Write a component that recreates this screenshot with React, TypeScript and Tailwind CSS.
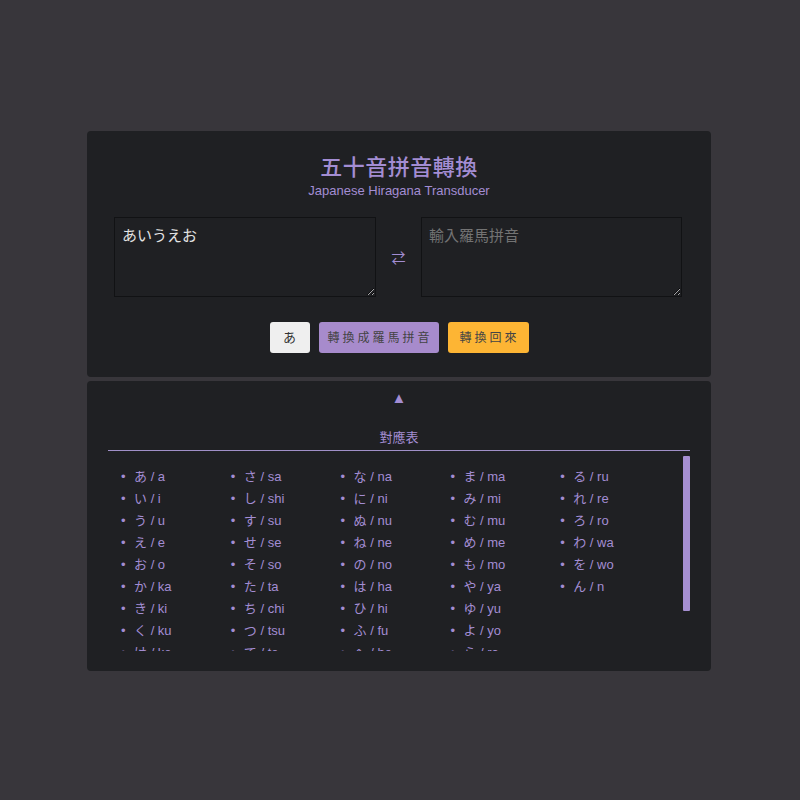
import React, { useState } from 'react'

const kana: [string, string][] = [
  ['あ', 'a'], ['い', 'i'], ['う', 'u'], ['え', 'e'], ['お', 'o'],
  ['か', 'ka'], ['き', 'ki'], ['く', 'ku'], ['け', 'ke'], ['こ', 'ko'],
  ['さ', 'sa'], ['し', 'shi'], ['す', 'su'], ['せ', 'se'], ['そ', 'so'],
  ['た', 'ta'], ['ち', 'chi'], ['つ', 'tsu'], ['て', 'te'], ['と', 'to'],
  ['な', 'na'], ['に', 'ni'], ['ぬ', 'nu'], ['ね', 'ne'], ['の', 'no'],
  ['は', 'ha'], ['ひ', 'hi'], ['ふ', 'fu'], ['へ', 'he'], ['ほ', 'ho'],
  ['ま', 'ma'], ['み', 'mi'], ['む', 'mu'], ['め', 'me'], ['も', 'mo'],
  ['や', 'ya'], ['ゆ', 'yu'], ['よ', 'yo'], ['ら', 'ra'], ['り', 'ri'],
  ['る', 'ru'], ['れ', 're'], ['ろ', 'ro'], ['わ', 'wa'], ['を', 'wo'],
  ['ん', 'n'],
]

function App() {
  const [input, setInput] = useState('あいうえお')
  const [output, setOutput] = useState('')

  return (
    <div
      className="min-h-screen bg-[#38363b] flex flex-col items-center justify-center gap-[4px] pr-[2px] pt-[2px]"
      style={{ fontFamily: '"Liberation Sans", Arial, "Noto Sans CJK TC", "Noto Sans CJK JP", sans-serif' }}
    >
      {/* converter card */}
      <div className="w-[624px] h-[246px] bg-[#1f2023] rounded-[4px] pt-[22px] flex flex-col items-center">
        <h1 className="text-[22px] leading-[30px] font-medium text-[#a38dd3] tracking-[0.5px]">五十音拼音轉換</h1>
        <p className="text-[13px] leading-[16px] text-[#a38dd3]">Japanese Hiragana Transducer</p>

        <div className="mt-[18px] flex items-center gap-[15px] pr-[2px]">
          <textarea
            value={input}
            onChange={(e) => setInput(e.target.value)}
            className="w-[262px] h-[80px] bg-[#1f2023] border border-[#111214] text-[#e4e4e4] text-[15px] leading-[20px] px-[7px] py-[8px] outline-none"
          />
          <span className="text-[#a38dd3] text-[14px] leading-[16px] w-[15px] text-center mt-[2px]">⇄</span>
          <textarea
            value={output}
            onChange={(e) => setOutput(e.target.value)}
            placeholder="輸入羅馬拼音"
            className="w-[261px] h-[80px] bg-[#1f2023] border border-[#111214] text-[#e4e4e4] placeholder:text-[#737373] text-[15px] leading-[20px] px-[7px] py-[8px] outline-none"
          />
        </div>

        <div className="mt-[25px] flex items-center gap-[9px]">
          <button className="w-[40px] h-[31px] rounded-[3px] bg-[#efefef] text-[#333] text-[13px]">あ</button>
          <button className="w-[120px] h-[31px] rounded-[3px] bg-[#a78bcc] text-[#444] text-[12px] tracking-[3px] pl-[3px]">轉換成羅馬拼音</button>
          <button className="w-[81px] h-[31px] rounded-[3px] bg-[#fdb534] text-[#444] text-[12px] tracking-[3px] pl-[3px]">轉換回來</button>
        </div>
      </div>

      {/* table card */}
      <div className="w-[624px] h-[290px] bg-[#1f2023] rounded-[4px] px-[20px] flex flex-col">
        <div className="text-center text-[#a38dd3] text-[15px] leading-[16px] mt-[9px]">▲</div>
        <div className="text-center text-[#a38dd3] text-[13px] leading-[16px] mt-[24px]">對應表</div>
        <div className="h-px bg-[#a090c8] mt-[4px] mx-[1px]" />
        <div className="relative mt-[5px] mr-[1px]">
          <div className="h-[195px] overflow-y-scroll [scrollbar-width:none]">
            <ul className="columns-5 gap-0 list-none pl-[27px] pr-[7px] pt-[10px] pb-[15px] text-[#a38dd3] text-[13px] leading-[22px]">
              {kana.map(([k, r]) => (
                <li key={r} className="relative before:content-['•'] before:absolute before:left-[-13px] before:text-[13px]">
                  {k} / {r}
                </li>
              ))}
            </ul>
          </div>
          {/* scrollbar thumb */}
          <div className="absolute top-0 right-0 w-[7px] h-[155px] bg-[#a68fd2] rounded-[1px]" />
        </div>
      </div>
    </div>
  )
}

export default App
